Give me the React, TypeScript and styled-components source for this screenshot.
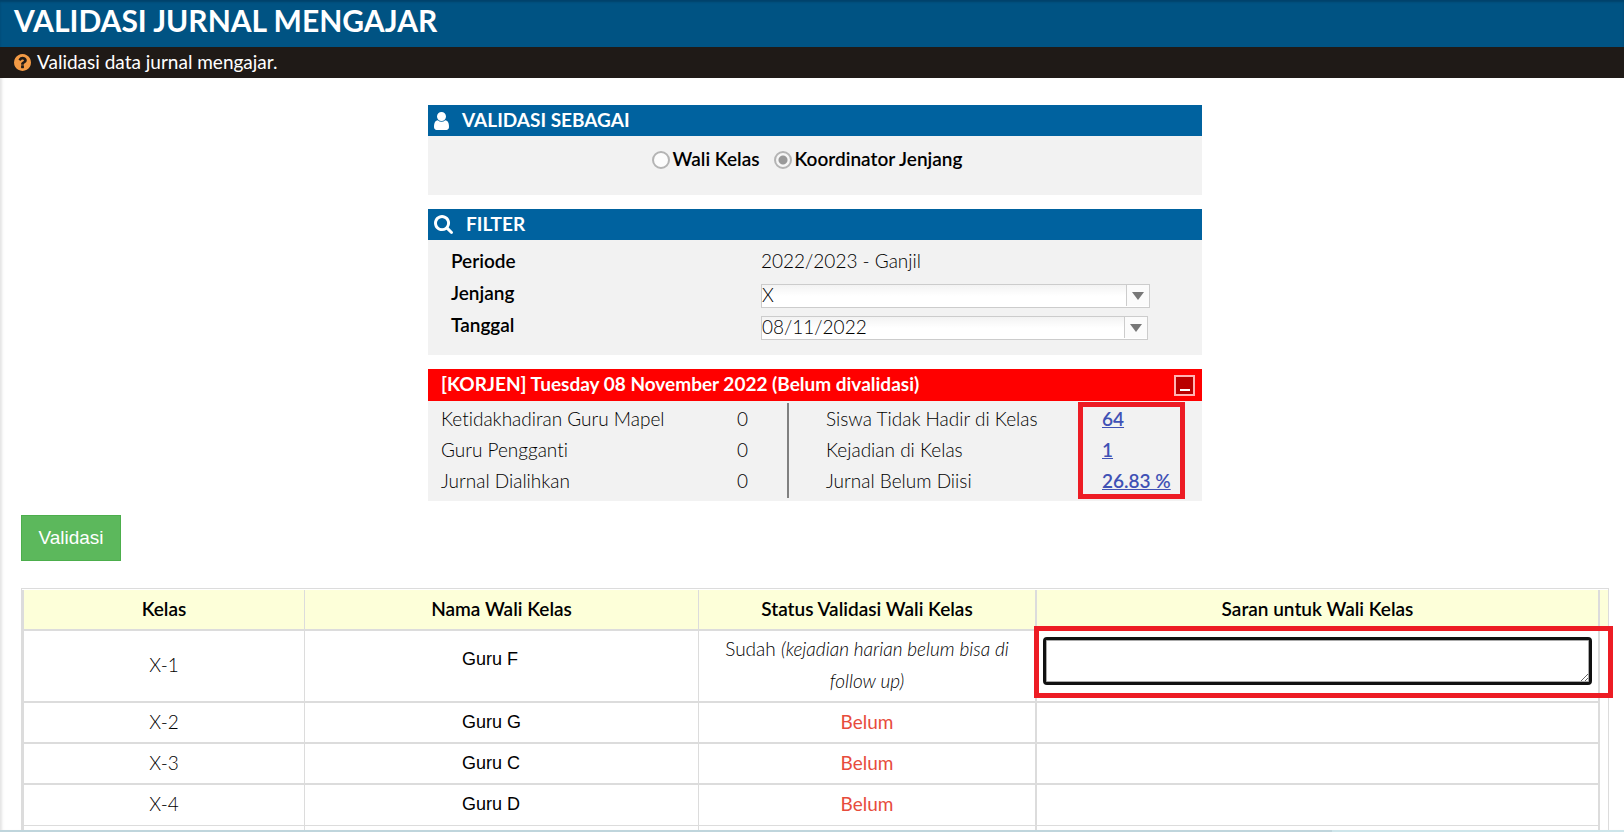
import React from "react";
import styled, { createGlobalStyle, css } from "styled-components";

const GlobalStyle = createGlobalStyle`
  * { box-sizing: border-box; }
  body {
    margin: 0;
    background: #fff;
    color: #000;
    font-family: Lato, "Liberation Sans", sans-serif;
    font-size: 19px;
    font-weight: 300;
    font-variant-ligatures: none;
    line-height: 32px;
  }
`;

const Page = styled.div`
  height: 100vh;
  display: flex;
  flex-direction: column;
  overflow: hidden;
`;

const TitleBar = styled.header`
  flex: none;
  height: 47px;
  padding: 0 14px;
  background: #005383;
  box-shadow: inset 0 2px 2px #00426b;
`;

const Title = styled.h1`
  margin: 0;
  color: #fff;
  font-size: 30px;
  font-weight: 700;
  line-height: 41px;
`;

const InfoBar = styled.div`
  flex: none;
  display: flex;
  align-items: center;
  gap: 6px;
  height: 31px;
  padding: 0 14px;
  background: #1f1a17;
  color: #fff;
  font-weight: 400;
  line-height: 30px;
  span { padding-bottom: 2px; }
`;

const Main = styled.main`
  flex: 1;
  min-height: 0;
  overflow: hidden;
  padding: 27px 15px 0 21px;
  box-shadow: inset 4px 0 3px -2px #e4e4e4;
`;

const Panels = styled.div`
  display: flex;
  flex-direction: column;
  gap: 14px;
  width: 774px;
  max-width: 100%;
  margin: 0 auto 14px;
`;

const Panel = styled.section`
  background: #f2f2f2;
`;

const PanelHead = styled.div<{ $alert?: boolean }>`
  display: flex;
  align-items: center;
  gap: 13px;
  height: ${(p) => (p.$alert ? 32 : 31)}px;
  padding: ${(p) => (p.$alert ? "0 7px 0 13px" : "0 6px")};
  background: ${(p) => (p.$alert ? "#ff0000" : "#00629f")};
  color: #fff;
`;

const PanelTitle = styled.h2`
  flex: 1;
  margin: 0;
  padding-bottom: 2px;
  font-size: 19px;
  font-weight: 700;
  line-height: 28px;
`;

const RoleChoice = styled.div`
  display: flex;
  justify-content: center;
  gap: 14px;
  height: 59px;
  padding: 7px 16px 0 0;
`;

const RadioLabel = styled.label`
  display: flex;
  align-items: center;
  gap: 3px;
  height: 32px;
  font-weight: 600;
`;

const Radio = styled.input`
  appearance: none;
  width: 18px;
  height: 18px;
  margin: 2px 0 0;
  border: 2px solid #b4b4b4;
  border-radius: 50%;
  background: #fcfcfc;
  &:checked {
    background: radial-gradient(circle, #999 0 4px, #f6f6f6 5px);
  }
`;

const FilterGrid = styled.div`
  display: grid;
  grid-template-columns: 310px 1fr;
  padding: 5px 23px 14px;
`;

const FieldName = styled.label`
  font-weight: 600;
`;

const Field = styled.div`
  display: flex;
  align-items: center;
  height: 32px;
`;

const Combo = styled.div<{ $width: number }>`
  display: flex;
  position: relative;
  width: ${(p) => p.$width}px;
  height: 24px;
  margin-top: 6px;
  border: 1px solid #ccc;
  background: linear-gradient(#f3f3f3, #fff 50%);
`;

const control = css`
  flex: 1;
  min-width: 0;
  height: 20px;
  padding: 0;
  border: 0;
  background: transparent;
  color: #000;
  font: inherit;
  line-height: 20px;
`;

const Select = styled.select`
  ${control}
  appearance: none;
`;

const DateInput = styled.input`
  ${control}
`;

const arrowBox = css`
  display: flex;
  align-items: center;
  justify-content: center;
  width: 23px;
  height: 21px;
  padding: 0;
  border: 0;
  border-left: 1px solid #ccc;
  background: #fbfbfb;
`;

const SelectArrow = styled.span`
  ${arrowBox}
  position: absolute;
  top: 0;
  right: 0;
  pointer-events: none;
`;

const DateButton = styled.button`
  ${arrowBox}
`;

const CollapseButton = styled.button`
  display: flex;
  align-items: flex-end;
  justify-content: center;
  width: 21px;
  height: 21px;
  padding: 0 0 3px;
  border: 2px solid #ffb3b3;
  background: #b90000;
  &::after {
    content: "";
    width: 10px;
    height: 2px;
    background: #fff;
  }
`;

const Summary = styled.div`
  position: relative;
  display: flex;
  padding: 2px 0 3px;
`;

const SummaryTable = styled.table`
  flex: none;
  border-collapse: collapse;
  line-height: 31px;
  td, th { padding: 0; text-align: left; font-weight: 300; vertical-align: top; }
  tr:last-child > * { height: 33px; }
`;

const LeftTable = styled(SummaryTable)`
  width: 361px;
  border-right: 2px solid #808080;
  th { padding-left: 13px; }
  td { width: 51px; }
`;

const RightTable = styled(SummaryTable)`
  width: 413px;
  th { padding-left: 37px; }
  td { width: 100px; }
`;

const CountLink = styled.a`
  color: #3f51b5;
  font-weight: 600;
`;

const highlight = css`
  position: absolute;
  border: 5px solid #ed1c24;
  pointer-events: none;
`;

const CountHighlight = styled.div`
  ${highlight}
  top: 1px;
  right: 17px;
  width: 107px;
  height: 97px;
`;

const SubmitButton = styled.button`
  display: block;
  width: 100px;
  height: 46px;
  margin-bottom: 27px;
  border: 1px solid #4cae4c;
  background: #5cb85c;
  color: #fff;
  font: 400 19px "Liberation Sans", Arial, sans-serif;
`;

const TableFrame = styled.div`
  border: 1px solid #dcdcdc;
  padding-top: 1px;
`;

const ClassTable = styled.table`
  width: 100%;
  table-layout: fixed;
  border-collapse: separate;
  border-spacing: 0;
  text-align: center;
`;

const line = "#dcdcdc";

const cell = css`
  border: 0 solid ${line};
  border-bottom-width: 2px;
  border-right-width: 1px;
  padding: 2px 8px 4px;
  &:first-child { border-left-width: 2px; }
  &:nth-child(3), &:nth-child(4) { border-right-width: 2px; }
`;

const HeadCell = styled.th`
  ${cell}
  height: 41px;
  background: #fdffd9;
  font-weight: 600;
  &:last-child { border-width: 0; }
`;

const Row = styled.tr`
  &:last-child > td { border-bottom-width: 0; }
  &:nth-last-child(2) > td { border-bottom-width: 1px; }
`;

const Cell = styled.td`
  ${cell}
  height: 41px;
`;

const NameCell = styled(Cell)<{ $raised?: boolean }>`
  padding: ${(p) => (p.$raised ? "0 8px 14px 157px" : "2px 8px 4px 157px")};
  text-align: left;
  font-family: "Liberation Sans", Arial, sans-serif;
  font-size: 18px;
  font-weight: 400;
`;

const AdviceCell = styled(Cell)`
  position: relative;
  padding: 0 6px;
`;

const Gutter = styled.td`
  padding: 0;
`;

const Pending = styled.span`
  color: #e74c3c;
  font-weight: 400;
`;

const Advice = styled.textarea`
  display: block;
  width: 100%;
  height: 48px;
  margin-bottom: 10px;
  border: 3px solid #111;
  border-radius: 4px;
  outline: 0;
  background: #fff;
  box-shadow: inset 0 0 0 1px #aaa;
  resize: both;
  font: inherit;
`;

const AdviceHighlight = styled.div`
  ${highlight}
  top: -5px;
  left: -3px;
  right: -15px;
  height: 72px;
`;

const BottomEdge = styled.footer`
  flex: none;
  height: 2px;
  background: linear-gradient(to right, #bfd5dc 82%, #cde5ea 82%);
`;

const HelpIcon = () => (
  <svg width="17" height="17" viewBox="128 128 1536 1536" fill="#f29a45" aria-hidden="true">
    <path d="M1024 1376v-192q0-14-9-23t-23-9h-192q-14 0-23 9t-9 23v192q0 14 9 23t23 9h192q14 0 23-9t9-23zm256-672q0-88-55.5-163t-138.5-116-170-41q-243 0-371 213-15 24 8 42l132 100q7 6 19 6 16 0 25-12 53-68 86-92 34-24 86-24 48 0 85.5 26t37.5 59q0 38-20 61t-68 45q-63 28-115.5 86.5t-52.5 125.5v36q0 14 9 23t23 9h192q14 0 23-9t9-23q0-19 21.5-49.5t54.5-49.5q32-18 49-28.5t46-35 44.5-48 28-60.5 12.5-81zm384 192q0 209-103 385.5t-279.5 279.5-385.5 103-385.5-103-279.5-279.5-103-385.5 103-385.5 279.5-279.5 385.5-103 385.5 103 279.5 279.5 103 385.5z" />
  </svg>
);

const UserIcon = () => (
  <svg width="15" height="18" viewBox="0 128 1280 1536" fill="#fff" aria-hidden="true">
    <path d="M1280 1399q0 109-62.5 187t-150.5 78h-854q-88 0-150.5-78t-62.5-187q0-85 8.5-160.5t31.5-152 58.5-131 94-89 134.5-34.5q131 128 313 128t313-128q76 0 134.5 34.5t94 89 58.5 131 31.5 152 8.5 160.5zm-256-887q0 159-112.5 271.5t-271.5 112.5-271.5-112.5-112.5-271.5 112.5-271.5 271.5-112.5 271.5 112.5 112.5 271.5z" />
  </svg>
);

const SearchIcon = () => (
  <svg width="19" height="19" viewBox="64 128 1664 1664" fill="#fff" aria-hidden="true">
    <path d="M1216 832q0-185-131.5-316.5t-316.5-131.5-316.5 131.5-131.5 316.5 131.5 316.5 316.5 131.5 316.5-131.5 131.5-316.5zm512 832q0 52-38 90t-90 38q-54 0-90-38l-343-342q-179 124-399 124-143 0-273.5-55.5t-225-150-150-225-55.5-273.5 55.5-273.5 150-225 225-150 273.5-55.5 273.5 55.5 225 150 150 225 55.5 273.5q0 220-124 399l343 343q37 37 37 90z" />
  </svg>
);

const ArrowIcon = () => (
  <svg width="12" height="8" viewBox="0 0 12 8" aria-hidden="true">
    <path d="M0 0h12L6 8z" fill="#777" />
  </svg>
);

const teacherCounts = [
  { label: "Ketidakhadiran Guru Mapel", value: "0" },
  { label: "Guru Pengganti", value: "0" },
  { label: "Jurnal Dialihkan", value: "0" },
];

const classCounts = [
  { label: "Siswa Tidak Hadir di Kelas", value: "64" },
  { label: "Kejadian di Kelas", value: "1" },
  { label: "Jurnal Belum Diisi", value: "26.83 %" },
];

const classes = [
  { kelas: "X-1", guru: "Guru F", done: true },
  { kelas: "X-2", guru: "Guru G", done: false },
  { kelas: "X-3", guru: "Guru C", done: false },
  { kelas: "X-4", guru: "Guru D", done: false },
];

export default function App() {
  return (
    <Page>
      <GlobalStyle />
      <TitleBar>
        <Title>VALIDASI JURNAL MENGAJAR</Title>
      </TitleBar>
      <InfoBar>
        <HelpIcon />
        <span>Validasi data jurnal mengajar.</span>
      </InfoBar>
      <Main>
        <Panels>
          <Panel>
            <PanelHead>
              <UserIcon />
              <PanelTitle>VALIDASI SEBAGAI</PanelTitle>
            </PanelHead>
            <RoleChoice>
              <RadioLabel>
                <Radio type="radio" name="role" value="wali" />
                Wali Kelas
              </RadioLabel>
              <RadioLabel>
                <Radio type="radio" name="role" value="koordinator" defaultChecked />
                Koordinator Jenjang
              </RadioLabel>
            </RoleChoice>
          </Panel>

          <Panel>
            <PanelHead>
              <SearchIcon />
              <PanelTitle>FILTER</PanelTitle>
            </PanelHead>
            <FilterGrid>
              <FieldName as="span">Periode</FieldName>
              <Field>2022/2023 - Ganjil</Field>
              <FieldName htmlFor="jenjang">Jenjang</FieldName>
              <Field>
                <Combo $width={389}>
                  <Select id="jenjang" defaultValue="X">
                    <option>X</option>
                    <option>XI</option>
                    <option>XII</option>
                  </Select>
                  <SelectArrow>
                    <ArrowIcon />
                  </SelectArrow>
                </Combo>
              </Field>
              <FieldName htmlFor="tanggal">Tanggal</FieldName>
              <Field>
                <Combo $width={387}>
                  <DateInput id="tanggal" type="text" defaultValue="08/11/2022" />
                  <DateButton type="button" aria-label="Pilih tanggal">
                    <ArrowIcon />
                  </DateButton>
                </Combo>
              </Field>
            </FilterGrid>
          </Panel>

          <Panel>
            <PanelHead $alert>
              <PanelTitle>[KORJEN] Tuesday 08 November 2022 (Belum divalidasi)</PanelTitle>
              <CollapseButton type="button" aria-label="Tutup" />
            </PanelHead>
            <Summary>
              <LeftTable>
                <tbody>
                  {teacherCounts.map((c) => (
                    <tr key={c.label}>
                      <th scope="row">{c.label}</th>
                      <td>{c.value}</td>
                    </tr>
                  ))}
                </tbody>
              </LeftTable>
              <RightTable>
                <tbody>
                  {classCounts.map((c) => (
                    <tr key={c.label}>
                      <th scope="row">{c.label}</th>
                      <td>
                        <CountLink href="#">{c.value}</CountLink>
                      </td>
                    </tr>
                  ))}
                </tbody>
              </RightTable>
              <CountHighlight />
            </Summary>
          </Panel>
        </Panels>

        <SubmitButton type="button">Validasi</SubmitButton>

        <TableFrame>
          <ClassTable>
            <colgroup>
              <col width="283" />
              <col width="394" />
              <col width="338" />
              <col />
              <col width="8" />
            </colgroup>
            <thead>
              <tr>
                <HeadCell scope="col">Kelas</HeadCell>
                <HeadCell scope="col">Nama Wali Kelas</HeadCell>
                <HeadCell scope="col">Status Validasi Wali Kelas</HeadCell>
                <HeadCell scope="col">Saran untuk Wali Kelas</HeadCell>
                <HeadCell as="td" />
              </tr>
            </thead>
            <tbody>
              {classes.map((c) => (
                <Row key={c.kelas}>
                  <Cell>{c.kelas}</Cell>
                  <NameCell $raised={c.done}>{c.guru}</NameCell>
                  <Cell>
                    {c.done ? (
                      <>
                        Sudah <i>(kejadian harian belum bisa di follow up)</i>
                      </>
                    ) : (
                      <Pending>Belum</Pending>
                    )}
                  </Cell>
                  <AdviceCell>
                    {c.done && (
                      <>
                        <Advice aria-label={`Saran untuk ${c.kelas}`} />
                        <AdviceHighlight />
                      </>
                    )}
                  </AdviceCell>
                  <Gutter />
                </Row>
              ))}
              <Row>
                <Cell />
                <Cell />
                <Cell />
                <Cell />
                <Gutter />
              </Row>
            </tbody>
          </ClassTable>
        </TableFrame>
      </Main>
      <BottomEdge />
    </Page>
  );
}
